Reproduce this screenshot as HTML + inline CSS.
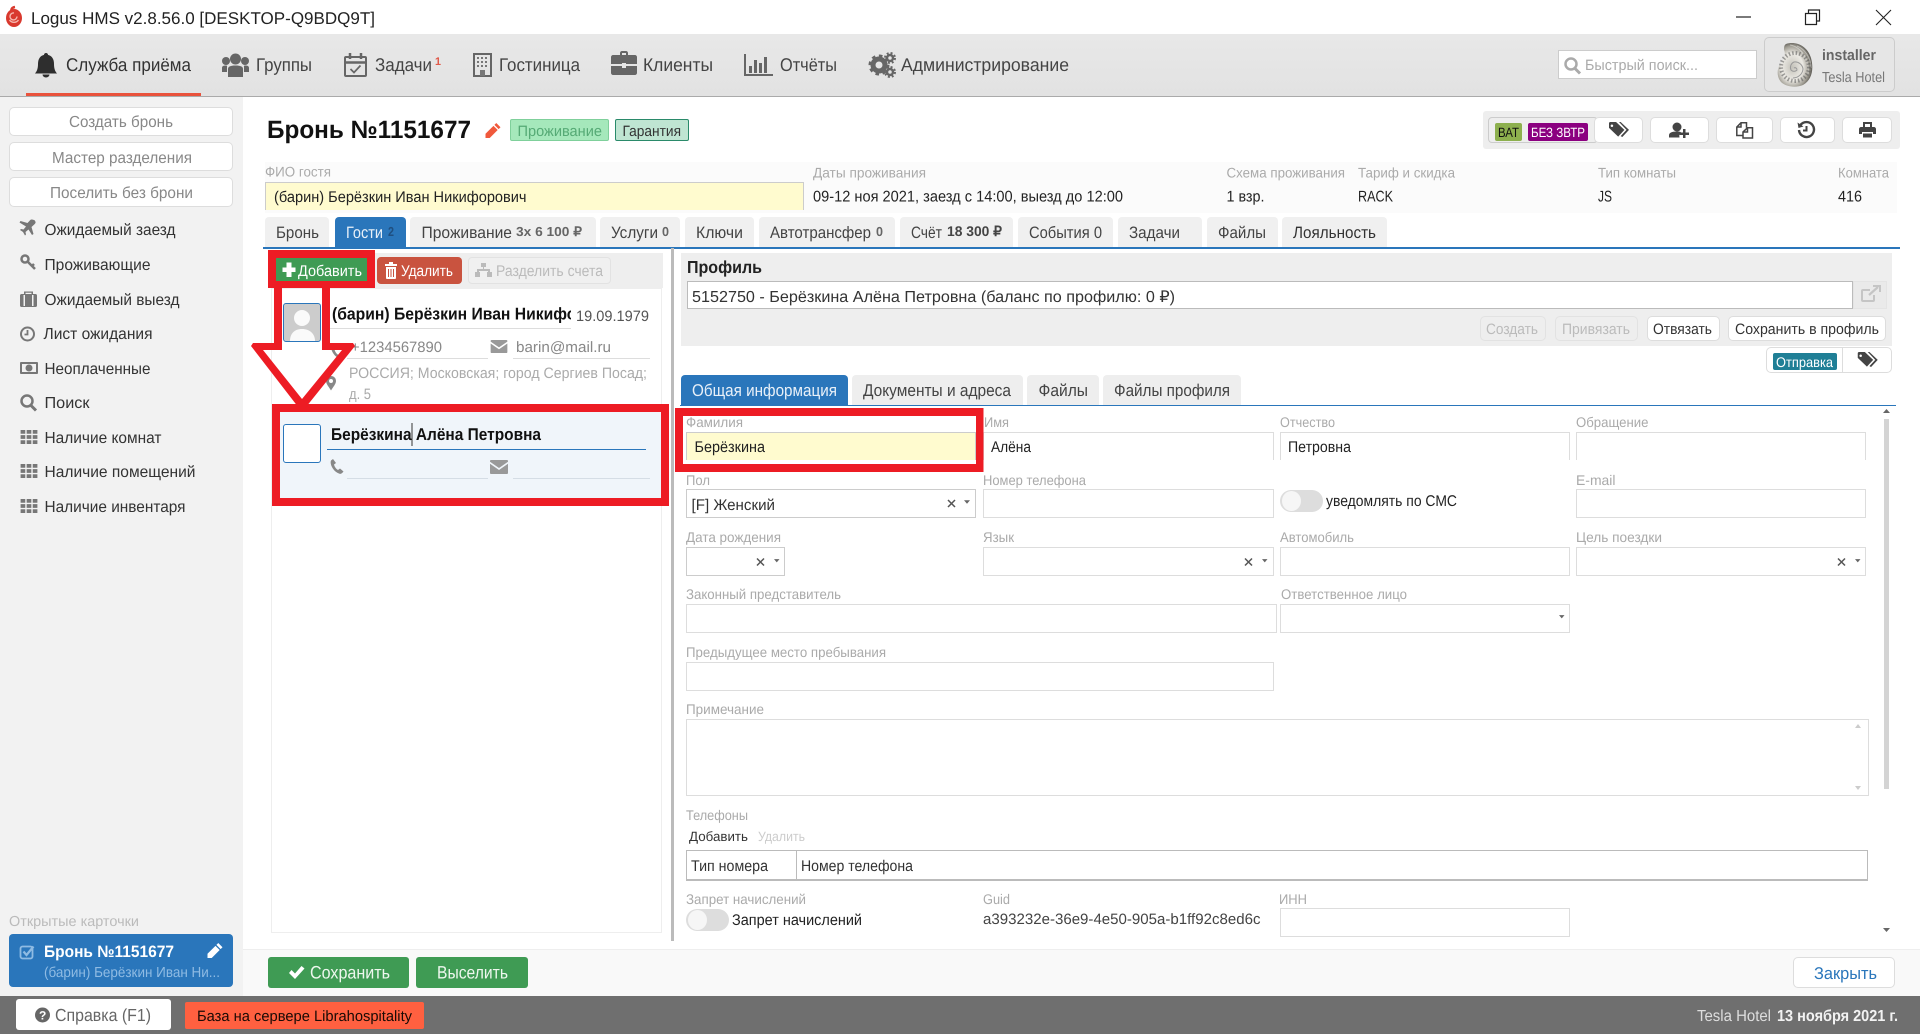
<!DOCTYPE html>
<html lang="ru"><head><meta charset="utf-8"><title>Logus HMS</title>
<style>
html,body{margin:0;padding:0;width:1920px;height:1034px;overflow:hidden;background:#fff;font-family:"Liberation Sans",sans-serif}
.b{position:absolute;box-sizing:border-box}
.tab{position:absolute;box-sizing:border-box;top:217px;height:30px;background:#f0f0f0;border-radius:4px 4px 0 0}
.tab2{position:absolute;box-sizing:border-box;top:375px;height:30px;background:#eee;border-radius:4px 4px 0 0}
.i{position:absolute;box-sizing:border-box;background:#fff;border:1px solid #ddd;height:29px}
.c{border-bottom:none;height:28px;top:432px}
.btn{position:absolute;box-sizing:border-box;background:#fff;border:1px solid #ddd;border-radius:5px}
svg.top{position:absolute;left:0;top:0}
svg.soft{filter:blur(.3px)}
text{font-family:"Liberation Sans",sans-serif;text-rendering:geometricPrecision}
.n{font-size:18.4px;fill:#444}
.s{font-size:16px;fill:#333}
.sb{font-size:16px;fill:#888}
.l{font-size:14px;fill:#aaa}
.v{font-size:15.5px;fill:#222}
.t{font-size:16.5px;fill:#444}
.m{font-size:13px;font-weight:bold;fill:#666}
.w{font-size:15.5px;fill:#fff}
.d{font-size:15px;fill:#bbb}
.k{font-size:15px;fill:#333}
</style></head><body>

<!-- nav -->
<div class="b" style="left:0;top:34px;width:1920px;height:63px;background:linear-gradient(#e8e8e8,#e2e2e2);border-bottom:1px solid #aaa"></div>
<div class="b" style="left:26px;top:93px;width:175px;height:3px;background:#e9523c"></div>
<div class="b" style="left:1558px;top:50px;width:199px;height:29px;background:#fff;border:1px solid #ccc"></div>
<div class="b" style="left:1764px;top:37px;width:131px;height:55px;background:#e6e6e6;border:1px solid #ccc;border-radius:5px"></div>

<!-- sidebar -->
<div class="b" style="left:0;top:97px;width:243px;height:899px;background:#f2f2f2"></div>
<div class="btn" style="left:9px;top:107px;width:224px;height:29px"></div>
<div class="btn" style="left:9px;top:142px;width:224px;height:29px"></div>
<div class="btn" style="left:9px;top:177px;width:224px;height:30px"></div>
<div class="b" style="left:9px;top:934px;width:224px;height:53px;background:#2a76bb;border-radius:4px"></div>

<!-- header tools -->
<div class="b" style="left:1483px;top:111px;width:417px;height:38px;background:#eee;border-radius:3px"></div>
<div class="b" style="left:1488px;top:117px;width:110px;height:26px;background:#eee;border:1px solid #ccc;border-radius:4px"></div>
<div class="b" style="left:1495px;top:123px;width:27px;height:18px;background:#8db04e;border-radius:2px"></div>
<div class="b" style="left:1528px;top:123px;width:60px;height:18px;background:#8b0080;border-radius:2px"></div>
<div class="btn" style="left:1594px;top:117px;width:49px;height:26px"></div>
<div class="btn" style="left:1650px;top:117px;width:59px;height:26px"></div>
<div class="btn" style="left:1716px;top:117px;width:57px;height:26px"></div>
<div class="btn" style="left:1780px;top:117px;width:55px;height:26px"></div>
<div class="btn" style="left:1842px;top:117px;width:50px;height:26px"></div>
<div class="b" style="left:510px;top:119px;width:99px;height:22px;background:#a5e8bb;border:1px solid #7fd09b;border-radius:2px"></div>
<div class="b" style="left:615px;top:119px;width:74px;height:22px;background:#bfe5d2;border:1px solid #2a8a6a;border-radius:2px"></div>

<!-- info band -->
<div class="b" style="left:265px;top:162px;width:1632px;height:51px;background:#fbfbfb"></div>
<div class="b" style="left:265px;top:182px;width:539px;height:28px;background:#fffbcf;border:1px solid #ccc;border-bottom:none"></div>

<!-- main tabs -->
<div class="tab" style="left:265px;width:64px"></div>
<div class="tab" style="left:335px;width:71px;background:#2a76bb"></div>
<div class="tab" style="left:410px;width:186px"></div>
<div class="tab" style="left:600px;width:80px"></div>
<div class="tab" style="left:685px;width:69px"></div>
<div class="tab" style="left:759px;width:136px"></div>
<div class="tab" style="left:900px;width:113px"></div>
<div class="tab" style="left:1018px;width:95px"></div>
<div class="tab" style="left:1118px;width:84px"></div>
<div class="tab" style="left:1207px;width:71px"></div>
<div class="tab" style="left:1282px;width:105px"></div>
<div class="b" style="left:263px;top:247px;width:1637px;height:2px;background:#2a76bb"></div>

<!-- guests panel -->
<div class="b" style="left:268px;top:253px;width:395px;height:35px;background:#eee"></div>
<div class="b" style="left:271px;top:288px;width:391px;height:645px;background:#fff;border:1px solid #eee"></div>
<div class="b" style="left:276px;top:258px;width:91px;height:23px;background:#3f9b54"></div>
<div class="b" style="left:377px;top:257px;width:85px;height:27px;background:#c9533f;border-radius:4px"></div>
<div class="b" style="left:468px;top:257px;width:143px;height:27px;background:#f0f0f0;border:1px solid #e2e2e2;border-radius:4px"></div>
<div class="b" style="left:283px;top:303px;width:38px;height:39px;background:#ccc;border:1px solid #2a76bb;border-radius:3px;overflow:hidden"></div>
<div class="b" style="left:280px;top:412px;width:381px;height:86px;background:#f0f5fa"></div>
<div class="b" style="left:283px;top:424px;width:38px;height:39px;background:#fff;border:1px solid #2a76bb;border-radius:3px"></div>
<div class="b" style="left:330px;top:328px;width:241px;height:1px;background:#ddd"></div>
<div class="b" style="left:347px;top:358px;width:141px;height:1px;background:#ddd"></div>
<div class="b" style="left:513px;top:358px;width:137px;height:1px;background:#ddd"></div>
<div class="b" style="left:327px;top:449px;width:319px;height:1px;background:#2a76bb"></div>
<div class="b" style="left:347px;top:478px;width:141px;height:1px;background:#d5dde5"></div>
<div class="b" style="left:513px;top:478px;width:137px;height:1px;background:#d5dde5"></div>

<!-- divider -->
<div class="b" style="left:671px;top:248px;width:3px;height:693px;background:#bbb"></div>

<!-- profile -->
<div class="b" style="left:681px;top:253px;width:1211px;height:93px;background:#eee"></div>
<div class="b" style="left:687px;top:281px;width:1166px;height:28px;background:#fff;border:1px solid #bbb"></div>
<div class="b" style="left:1853px;top:281px;width:34px;height:28px;background:#eaeaea;border:1px solid #e4e4e4"></div>
<div class="btn" style="left:1480px;top:316px;width:66px;height:25px;background:#eee;border-color:#e2e2e2"></div>
<div class="btn" style="left:1555px;top:316px;width:83px;height:25px;background:#eee;border-color:#e2e2e2"></div>
<div class="btn" style="left:1647px;top:316px;width:73px;height:25px"></div>
<div class="btn" style="left:1728px;top:316px;width:158px;height:25px"></div>
<div class="btn" style="left:1766px;top:347px;width:126px;height:26px"></div>
<div class="b" style="left:1773px;top:353px;width:64px;height:17px;background:#1f7f96;border-radius:2px"></div>
<div class="b" style="left:1842px;top:347px;width:1px;height:26px;background:#ddd"></div>

<!-- profile tabs -->
<div class="tab2" style="left:681px;width:167px;background:#2a76bb"></div>
<div class="tab2" style="left:852px;width:171px"></div>
<div class="tab2" style="left:1027px;width:72px"></div>
<div class="tab2" style="left:1103px;width:138px"></div>
<div class="b" style="left:680px;top:405px;width:1216px;height:1px;background:#2a76bb"></div>

<!-- form -->
<div class="i c" style="left:686px;width:290px;background:#fffbcf;border-color:#ccc"></div>
<div class="i c" style="left:983px;width:291px"></div>
<div class="i c" style="left:1280px;width:290px"></div>
<div class="i c" style="left:1576px;width:290px"></div>
<div class="i" style="left:686px;top:489px;width:290px;border-color:#ccc"></div>
<div class="i" style="left:983px;top:489px;width:291px"></div>
<div class="b" style="left:1280px;top:490px;width:43px;height:22px;background:#ddd;border-radius:11px"></div>
<div class="b" style="left:1282px;top:491px;width:19px;height:20px;background:#f6f6f6;border-radius:50%"></div>
<div class="i" style="left:1576px;top:489px;width:290px"></div>
<div class="i" style="left:686px;top:547px;width:99px;border-color:#ccc"></div>
<div class="i" style="left:983px;top:547px;width:291px"></div>
<div class="i" style="left:1280px;top:547px;width:290px"></div>
<div class="i" style="left:1576px;top:547px;width:290px"></div>
<div class="i" style="left:686px;top:604px;width:591px"></div>
<div class="i" style="left:1280px;top:604px;width:290px"></div>
<div class="i" style="left:686px;top:662px;width:588px"></div>
<div class="i" style="left:686px;top:719px;width:1183px;height:77px"></div>
<div class="b" style="left:686px;top:850px;width:1182px;height:31px;background:#fff;border:1px solid #bbb;border-bottom-width:2px"></div>
<div class="b" style="left:796px;top:850px;width:1px;height:30px;background:#bbb"></div>
<div class="b" style="left:686px;top:909px;width:43px;height:22px;background:#ddd;border-radius:11px"></div>
<div class="b" style="left:688px;top:910px;width:19px;height:20px;background:#f6f6f6;border-radius:50%"></div>
<div class="i" style="left:1280px;top:908px;width:290px"></div>
<div class="b" style="left:1884px;top:419px;width:5px;height:370px;background:#d4d4d4"></div>

<!-- footer -->
<div class="b" style="left:243px;top:949px;width:1677px;height:47px;background:#f9f9f9;border-top:1px solid #eee"></div>
<div class="b" style="left:268px;top:957px;width:141px;height:31px;background:#3f9b54;border-radius:3px"></div>
<div class="b" style="left:416px;top:957px;width:112px;height:31px;background:#3f9b54;border-radius:3px"></div>
<div class="btn" style="left:1793px;top:957px;width:102px;height:31px"></div>
<div class="b" style="left:0;top:996px;width:1920px;height:38px;background:#6f6f6f"></div>
<div class="b" style="left:16px;top:999px;width:155px;height:31px;background:#fff;border-radius:3px"></div>
<div class="b" style="left:185px;top:1002px;width:239px;height:27px;background:#ff6040;border-radius:2px"></div>

<svg class="top soft" width="1920" height="1034" viewBox="0 0 1920 1034" xmlns="http://www.w3.org/2000/svg">
<defs>
<radialGradient id="sh" cx="42%" cy="55%" r="62%"><stop offset="0" stop-color="#c4c2ba"/><stop offset=".5" stop-color="#eceae4"/><stop offset=".78" stop-color="#a09d93"/><stop offset="1" stop-color="#3f3d38"/></radialGradient>
<symbol id="tag" viewBox="0 0 24 18"><path fill="#444" d="M0 1.5C0 .7.7 0 1.500 0h7l10 9.500L11 17.500 0 7zM3.500 3a1.500 1.500 0 1 0 0 3 1.500 1.500 0 0 0 0-3zM12 0h2l10 9.500L16 18l-2-1 7-7.500z"/></symbol>
<symbol id="grid" viewBox="0 0 18 15"><path fill="#777" d="M0 0h5v4H0zM6.500 0h5v4h-5zM13 0h5v4h-5zM0 5.500h5v4H0zM6.500 5.500h5v4h-5zM13 5.500h5v4h-5zM0 11h5v4H0zM6.500 11h5v4h-5zM13 11h5v4h-5z"/></symbol>
<symbol id="phone" viewBox="0 0 14 15"><path fill="#888" d="M3 0L1 1.500C-.5 5 3 12.500 9.500 14.800c1.500.4 3-.8 4-2.300L10 9.500 8 11C6 10 4.500 7.500 4 5.500L6 4z"/></symbol>
<symbol id="env" viewBox="0 0 18 14"><path fill="#999" d="M1 0h16c.6 0 1 .4 1 1v.8L9 8 0 1.800V1c0-.6.4-1 1-1zM0 3.800L9 10l9-6.200V13c0 .6-.4 1-1 1H1c-.6 0-1-.4-1-1z"/></symbol>
<symbol id="pen" viewBox="0 0 16 16"><path d="M11.500 0L16 4.500 14 6.500 9.500 2zM8.500 3L13 7.500 4.500 16H0v-4.500z"/></symbol>
<symbol id="x" viewBox="0 0 9 9"><path d="M1 1l7 7M8 1L1 8" stroke="#555" stroke-width="1.500" fill="none"/></symbol>
<symbol id="car" viewBox="0 0 7 4"><path fill="#666" d="M0 0h7L3.500 4z"/></symbol>
</defs>

<!-- title bar -->
<g>
<ellipse cx="14" cy="18" rx="8" ry="9" fill="#d9392e"/><path d="M15 7c-3 .5-4 2-3.500 4.500" stroke="#d9392e" stroke-width="2.500" fill="none"/><path d="M17 16.500a3.500 3.500 0 1 1-3-3.500M9.500 20a5.500 5.500 0 0 0 9 0" stroke="#f6b7ad" stroke-width="1.400" fill="none"/>
</g>
<text x="31" y="24" font-size="17" fill="#222" textLength="344" lengthAdjust="spacingAndGlyphs">Logus HMS v2.8.56.0 [DESKTOP-Q9BDQ9T]</text>
<path d="M1736 17h15" stroke="#222" stroke-width="1.200"/>
<path d="M1805.500 13.500h11v11h-11zM1808.500 13.500v-3.500h11v11h-3" fill="none" stroke="#222" stroke-width="1.200"/>
<path d="M1876 10l15 15M1891 10l-15 15" stroke="#222" stroke-width="1.100"/>

<!-- nav icons -->
<path fill="#2e2e2e" d="M46 53c1.300 0 2 .9 2 1.900 4 1 6 4.300 6 9.100 0 5.500 1.500 7.500 3 9.500H35c1.500-2 3-4 3-9.500 0-4.800 2-8.100 6-9.100 0-1 .7-1.900 2-1.900zM42.500 74.500h7a3.500 3 0 0 1-7 0z"/>
<g fill="#666"><circle cx="235.500" cy="59" r="5.500"/><circle cx="226" cy="61" r="4"/><circle cx="245" cy="61" r="4"/><path d="M228 77V69c0-2.500 2.500-3.500 7.500-3.500S243 66.500 243 69v8zM222 72v-4c0-2 1.500-2.500 4-2.500 1 0 1.300.3 1 1.500v5zM249 72v-4c0-2-1.500-2.500-4-2.500-1 0-1.300.3-1 1.500v5z"/></g>
<g fill="none" stroke="#666" stroke-width="2"><rect x="345" y="57" width="21" height="19" rx="1"/><path d="M345 62.500h21" stroke-width="2.500"/><path d="M350 53v6M361 53v6" stroke-width="2.500"/><path d="M350.500 69l3.500 3.500 6.500-7" stroke-width="1.700"/></g>
<g><rect x="474" y="54" width="17" height="22" fill="none" stroke="#666" stroke-width="2"/><path fill="#777" d="M477 57h2v2h-2zM481 57h2v2h-2zM485 57h2v2h-2zM477 61h2v2h-2zM481 61h2v2h-2zM485 61h2v2h-2zM477 65h2v2h-2zM481 65h2v2h-2zM485 65h2v2h-2zM480 70h5v6h-5z"/></g>
<path fill="#666" d="M620 57v-2c0-1 .8-2 2-2h4c1.200 0 2 1 2 2v2h7c1 0 2 1 2 2v7h-11v-1h-4v1h-11v-7c0-1 1-2 2-2zM622 57h4v-2h-4zM611 68h11v2h4v-2h11v7c0 1-1 2-2 2h-22c-1 0-2-1-2-2z" transform="translate(0 -2)"/>
<g fill="#666"><path d="M744 54h2v20h27v2h-29z"/><path d="M749 66h3v7h-3zM754 60h3v13h-3zM759 63h3v10h-3zM764 57h3v16h-3z"/></g>
<g fill="none" stroke="#666"><circle cx="879" cy="65" r="6" stroke-width="5"/><circle cx="879" cy="65" r="9" stroke-width="3" stroke-dasharray="3.500 3.500"/><circle cx="890" cy="58" r="3" stroke-width="2.500"/><circle cx="890" cy="58" r="5" stroke-width="2" stroke-dasharray="2 2"/><circle cx="890" cy="72" r="3" stroke-width="2.500"/><circle cx="890" cy="72" r="5" stroke-width="2" stroke-dasharray="2 2"/></g>

<text class="n" x="66" y="71" textLength="125" lengthAdjust="spacingAndGlyphs" style="fill:#333">Служба приёма</text>
<text class="n" x="256" y="71" textLength="56" lengthAdjust="spacingAndGlyphs">Группы</text>
<text class="n" x="375" y="71" textLength="57" lengthAdjust="spacingAndGlyphs">Задачи</text>
<text x="435" y="65" font-size="11" font-weight="bold" fill="#e05a4a" textLength="6" lengthAdjust="spacingAndGlyphs">1</text>
<text class="n" x="499" y="71" textLength="81" lengthAdjust="spacingAndGlyphs">Гостиница</text>
<text class="n" x="643" y="71" textLength="70" lengthAdjust="spacingAndGlyphs">Клиенты</text>
<text class="n" x="780" y="71" textLength="57" lengthAdjust="spacingAndGlyphs">Отчёты</text>
<text class="n" x="901" y="71" textLength="168" lengthAdjust="spacingAndGlyphs">Администрирование</text>

<circle cx="1571" cy="64" r="5.500" fill="none" stroke="#aaa" stroke-width="2.500"/><path d="M1575 68.500l5 5" stroke="#aaa" stroke-width="3"/>
<text x="1585" y="70" font-size="15" fill="#aaa" textLength="113" lengthAdjust="spacingAndGlyphs">Быстрый поиск...</text>

<!-- shell -->
<path d="M1786 44c9-3 21 1 25 14 3 11 1 22-8 27-7 3-17 2-22-3-5-6-4-14 0-19 3-4 5-9 3-13 0-2 0-5 2-6z" fill="url(#sh)"/>
<path d="M1797 46c8 3 14 12 14 22M1790 45c12 2 20 16 18 30" fill="none" stroke="#fff" stroke-opacity=".4" stroke-width="1"/>
<circle cx="1795" cy="67" r="14" fill="none" stroke="#555" stroke-opacity=".55" stroke-width="4" stroke-dasharray="1.500 2"/>
<path d="M1794 68a2 2 0 0 1 3 2 4 4 0 0 1-6 0 6 6 0 0 1 3-8 8 8 0 0 1 9 7 10 10 0 0 1-10 9" fill="none" stroke="#999" stroke-width="1"/>
<text x="1822" y="60" font-size="15" font-weight="bold" fill="#666" textLength="54" lengthAdjust="spacingAndGlyphs">installer</text>
<text x="1822" y="82" font-size="14.500" fill="#777" textLength="63" lengthAdjust="spacingAndGlyphs">Tesla Hotel</text>

<!-- sidebar texts -->
<text class="sb" x="69" y="127" textLength="104" lengthAdjust="spacingAndGlyphs">Создать бронь</text>
<text class="sb" x="52" y="163" textLength="140" lengthAdjust="spacingAndGlyphs">Мастер разделения</text>
<text class="sb" x="50" y="198" textLength="143" lengthAdjust="spacingAndGlyphs">Поселить без брони</text>
<text class="s" x="44.500" y="235" textLength="131" lengthAdjust="spacingAndGlyphs">Ожидаемый заезд</text>
<text class="s" x="44.500" y="270" textLength="106" lengthAdjust="spacingAndGlyphs">Проживающие</text>
<text class="s" x="44.500" y="305" textLength="135" lengthAdjust="spacingAndGlyphs">Ожидаемый выезд</text>
<text class="s" x="43.500" y="339" textLength="109" lengthAdjust="spacingAndGlyphs">Лист ожидания</text>
<text class="s" x="44.500" y="374" textLength="106" lengthAdjust="spacingAndGlyphs">Неоплаченные</text>
<text class="s" x="44.500" y="408" textLength="45" lengthAdjust="spacingAndGlyphs">Поиск</text>
<text class="s" x="44.500" y="443" textLength="117" lengthAdjust="spacingAndGlyphs">Наличие комнат</text>
<text class="s" x="44.500" y="477" textLength="151" lengthAdjust="spacingAndGlyphs">Наличие помещений</text>
<text class="s" x="44.500" y="512" textLength="141" lengthAdjust="spacingAndGlyphs">Наличие инвентаря</text>

<!-- sidebar icons -->
<path fill="#777" d="M34 221c1 1 .8 2-.5 3.300L30.500 227l2 7-1.500 1-3.500-5.500-3 2.500.5 2.500-1 1-2-3.500-3-2 1-1 2.500.5 2.500-3L18.500 222.500l1-1.500 7 2 2.800-3c1.300-1.300 3.700 0 4.700.5z" transform="translate(1 0)"/>
<g fill="none" stroke="#777"><circle cx="25" cy="259" r="3.500" stroke-width="2.500"/><path d="M28 262l7 7M32 266l2-2" stroke-width="2.500"/></g>
<path fill="#777" d="M24 294v-2.500h9V294h2.500c1 0 1.500 .8 1.500 1.500v10c0 .8-.5 1.500-1.500 1.500h-14c-1 0-1.500-.7-1.500-1.500v-10c0-.7.500-1.500 1.500-1.500zM25.500 294h6v-1.200h-6zM23.500 295v11h1.500v-11zM32 295v11h1.500v-11z"/>
<g fill="none" stroke="#777"><circle cx="27.500" cy="334" r="6.500" stroke-width="2"/><path d="M27.500 330v4.500h-3" stroke-width="1.800"/></g>
<g><rect x="20" y="362" width="18" height="12" fill="#777" rx="1"/><rect x="22" y="364" width="14" height="8" fill="#f2f2f2"/><circle cx="29" cy="368" r="3.500" fill="#777"/></g>
<g fill="none" stroke="#777"><circle cx="27" cy="401" r="5.500" stroke-width="2.500"/><path d="M31 405.500l5 5" stroke-width="3"/></g>
<use href="#grid" x="20" y="430" width="18" height="14"/>
<use href="#grid" x="20" y="464" width="18" height="14"/>
<use href="#grid" x="20" y="499" width="18" height="14"/>

<text x="9" y="926" font-size="14.500" fill="#bbb" textLength="130" lengthAdjust="spacingAndGlyphs">Открытые карточки</text>
<g fill="none" stroke="#8fbbe3"><rect x="20.500" y="946.500" width="12" height="12" rx="2" stroke-width="1.800"/><path d="M23.500 951.500l3 3.500 7-8.500" stroke-width="2.200"/></g>
<text x="44" y="957" font-size="16.500" font-weight="bold" fill="#fff" textLength="130" lengthAdjust="spacingAndGlyphs">Бронь №1151677</text>
<use href="#pen" x="207" y="943" width="16" height="15" fill="#fff"/>
<text x="44" y="977" font-size="14.500" fill="#8fbbe3" textLength="176" lengthAdjust="spacingAndGlyphs">(барин) Берёзкин Иван Ни...</text>

<!-- header -->
<text x="267" y="138" font-size="25" font-weight="bold" fill="#111" textLength="204" lengthAdjust="spacingAndGlyphs">Бронь №1151677</text>
<use href="#pen" x="485" y="123" width="16" height="15" fill="#f0593c"/>
<text x="517.500" y="136" font-size="15" fill="#55aa75" textLength="84.500" lengthAdjust="spacingAndGlyphs">Проживание</text>
<text x="622.500" y="136" font-size="15" fill="#333" textLength="58.500" lengthAdjust="spacingAndGlyphs">Гарантия</text>
<text x="1498" y="137" font-size="13.500" fill="#111" textLength="21" lengthAdjust="spacingAndGlyphs">ВАТ</text>
<text x="1531" y="137" font-size="13.500" fill="#fff" textLength="54" lengthAdjust="spacingAndGlyphs">БЕЗ ЗВТР</text>
<use href="#tag" x="1609" y="122" width="20" height="15"/>
<g fill="#444"><circle cx="1677" cy="127" r="4.500"/><path d="M1669 137.500v-2c0-2.500 2-4 8-4 2 0 3 .2 4 .6-1.500 1-2 2.500-1.500 5.400z"/><path d="M1683 129h2.500v3.500h3.500v2.500h-3.500v3h-2.500v-3h-3.500v-2.500h3.500z"/></g>
<g fill="none" stroke="#444" stroke-width="1.500"><path d="M1743 135.500h-6.200V127l4.200-4.200h5.500v5"/><path d="M1741 123v4h-4"/><path d="M1747.500 127.800h5V138h-9.500v-6z" fill="#fff"/><path d="M1747.500 128v4h-4.500"/></g>
<g fill="none" stroke="#444"><path d="M1800.500 125a7.500 7.500 0 1 1-1.500 5" stroke-width="2.400"/><path d="M1806.500 126v4.500h-3.500" stroke-width="2"/><path d="M1797.500 122.500l1 5.500 5-1.500z" fill="#444" stroke="none"/></g>
<g fill="#444"><path d="M1863 122h9v5h-2v-3h-5v3h-2z"/><path d="M1861 127h13c1 0 2 1 2 2v5h-3v-2h-11v2h-3v-5c0-1 1-2 2-2z"/><path d="M1863 133.500h9v4h-9z"/></g>

<text class="l" x="265" y="176.500" textLength="66" lengthAdjust="spacingAndGlyphs">ФИО гостя</text>
<text class="v" x="274" y="202" textLength="252.500" lengthAdjust="spacingAndGlyphs">(барин) Берёзкин Иван Никифорович</text>
<text class="l" x="813" y="177.500" textLength="113" lengthAdjust="spacingAndGlyphs">Даты проживания</text>
<text class="v" x="813" y="201.500" textLength="310" lengthAdjust="spacingAndGlyphs">09-12 ноя 2021, заезд с 14:00, выезд до 12:00</text>
<text class="l" x="1226.500" y="177.500" textLength="118.500" lengthAdjust="spacingAndGlyphs">Схема проживания</text>
<text class="v" x="1226.500" y="201.500" textLength="38" lengthAdjust="spacingAndGlyphs">1 взр.</text>
<text class="l" x="1358" y="177.500" textLength="97" lengthAdjust="spacingAndGlyphs">Тариф и скидка</text>
<text class="v" x="1358" y="201.500" textLength="35" lengthAdjust="spacingAndGlyphs">RACK</text>
<text class="l" x="1598" y="177.500" textLength="78" lengthAdjust="spacingAndGlyphs">Тип комнаты</text>
<text class="v" x="1598" y="201.500" textLength="14" lengthAdjust="spacingAndGlyphs">JS</text>
<text class="l" x="1838" y="177.500" textLength="51" lengthAdjust="spacingAndGlyphs">Комната</text>
<text class="v" x="1838" y="201.500" textLength="24" lengthAdjust="spacingAndGlyphs">416</text>

<!-- tabs text -->
<text class="t" x="276" y="238" textLength="43" lengthAdjust="spacingAndGlyphs">Бронь</text>
<text class="t" x="346" y="238" textLength="37" lengthAdjust="spacingAndGlyphs" style="fill:#e8f0f8">Гости</text>
<text x="388" y="236" font-size="13" font-weight="bold" fill="#1f4f80" textLength="6" lengthAdjust="spacingAndGlyphs">2</text>
<text class="t" x="421.500" y="238" textLength="90.500" lengthAdjust="spacingAndGlyphs">Проживание</text>
<text class="m" x="516" y="236" textLength="66" lengthAdjust="spacingAndGlyphs">3x 6 100 ₽</text>
<text class="t" x="611" y="238" textLength="47" lengthAdjust="spacingAndGlyphs">Услуги</text>
<text class="m" x="662" y="236" textLength="7" lengthAdjust="spacingAndGlyphs">0</text>
<text class="t" x="696" y="238" textLength="47" lengthAdjust="spacingAndGlyphs">Ключи</text>
<text class="t" x="770" y="238" textLength="101" lengthAdjust="spacingAndGlyphs">Автотрансфер</text>
<text class="m" x="876" y="236" textLength="7" lengthAdjust="spacingAndGlyphs">0</text>
<text class="t" x="911" y="238" textLength="31" lengthAdjust="spacingAndGlyphs">Счёт</text>
<text x="947" y="236" font-size="14" font-weight="bold" fill="#444" textLength="55" lengthAdjust="spacingAndGlyphs">18 300 ₽</text>
<text class="t" x="1029" y="238" textLength="73" lengthAdjust="spacingAndGlyphs">События 0</text>
<text class="t" x="1129" y="238" textLength="51" lengthAdjust="spacingAndGlyphs">Задачи</text>
<text class="t" x="1218" y="238" textLength="48" lengthAdjust="spacingAndGlyphs">Файлы</text>
<text class="t" x="1293" y="238" textLength="83" lengthAdjust="spacingAndGlyphs" style="fill:#333">Лояльность</text>

<!-- guests toolbar -->
<path d="M286.500 263h5v5h4v4.500h-4v5h-5v-5h-4V268h4z" fill="#fff" transform="translate(0 -.500)"/>
<text class="w" x="298" y="276" textLength="64" lengthAdjust="spacingAndGlyphs">Добавить</text>
<g fill="#fff"><path d="M385 264h12v2h-12zM389 262h4v2h-4zM386 267h10v11c0 .6-.4 1-1 1h-8c-.6 0-1-.4-1-1z"/></g>
<path d="M388.500 269v8M391 269v8M393.500 269v8" stroke="#c9533f" stroke-width="1"/>
<text class="w" x="401" y="276" textLength="52" lengthAdjust="spacingAndGlyphs">Удалить</text>
<g fill="#bbb"><path d="M481 263h5v4h-2v2h6v3h2v5h-5v-5h1v-1h-9v1h1v5h-5v-5h2v-3h6v-2h-2z"/></g>
<text x="496" y="276" font-size="15.500" fill="#bbb" textLength="107" lengthAdjust="spacingAndGlyphs">Разделить счета</text>

<!-- guest 1 -->
<g fill="#fafafa"><circle cx="302" cy="318" r="8"/><path d="M290 341c0-7 4-12 12-12s13 5 13 12z"/></g>
<svg x="330" y="300" width="241" height="30" viewBox="330 300 241 30"><text x="332" y="319.500" font-size="17" font-weight="bold" fill="#111" textLength="292" lengthAdjust="spacingAndGlyphs">(барин) Берёзкин Иван Никифорович</text></svg>
<text x="576" y="321" font-size="15" fill="#555" textLength="73" lengthAdjust="spacingAndGlyphs">19.09.1979</text>
<use href="#phone" x="330" y="344" width="15" height="15"/>
<text x="351" y="352" font-size="15" fill="#888" textLength="91" lengthAdjust="spacingAndGlyphs">+1234567890</text>
<use href="#env" x="490" y="340" width="18" height="13"/>
<text x="516" y="352" font-size="15" fill="#888" textLength="95" lengthAdjust="spacingAndGlyphs">barin@mail.ru</text>
<path fill="#888" d="M331 376c3 0 5 2.200 5 5 0 3-3 6-5 9.500-2-3.500-5-6.500-5-9.500 0-2.800 2-5 5-5zm0 3a2 2 0 1 0 0 4 2 2 0 0 0 0-4z"/>
<text x="349" y="378" font-size="15" fill="#aaa" textLength="298" lengthAdjust="spacingAndGlyphs">РОССИЯ; Московская; город Сергиев Посад;</text>
<text x="349" y="399" font-size="15" fill="#aaa" textLength="22" lengthAdjust="spacingAndGlyphs">д. 5</text>

<!-- guest 2 -->
<text x="331" y="440" font-size="17" font-weight="bold" fill="#111" textLength="210" lengthAdjust="spacingAndGlyphs">Берёзкина Алёна Петровна</text>
<path d="M412 423v23" stroke="#333" stroke-width="1"/>
<use href="#phone" x="329.500" y="459" width="15" height="15"/>
<use href="#env" x="490" y="460" width="18" height="14"/>

<!-- profile text -->
<text x="687" y="273" font-size="17.500" font-weight="bold" fill="#222" textLength="75" lengthAdjust="spacingAndGlyphs">Профиль</text>
<text x="692" y="302" font-size="16" fill="#333" textLength="483" lengthAdjust="spacingAndGlyphs">5152750 - Берёзкина Алёна Петровна (баланс по профилю: 0 ₽)</text>
<g fill="none" stroke="#c5c5c5"><path d="M1870 290h-7c-.6 0-1 .4-1 1v9c0 .6.4 1 1 1h10c.6 0 1-.4 1-1v-5" stroke-width="2"/><path d="M1869 295l9-8" stroke-width="2.200"/><path d="M1873 286h7v6" stroke-width="2"/></g>
<text class="d" x="1486" y="334" textLength="52" lengthAdjust="spacingAndGlyphs">Создать</text>
<text class="d" x="1562" y="334" textLength="68" lengthAdjust="spacingAndGlyphs">Привязать</text>
<text class="k" x="1653" y="334" textLength="59" lengthAdjust="spacingAndGlyphs">Отвязать</text>
<text class="k" x="1735" y="334" textLength="144" lengthAdjust="spacingAndGlyphs">Сохранить в профиль</text>
<text x="1776" y="367" font-size="14" fill="#fff" textLength="57" lengthAdjust="spacingAndGlyphs">Отправка</text>
<use href="#tag" x="1857.500" y="352" width="20.500" height="15"/>

<text x="692" y="396" font-size="17" fill="#e8f0f8" textLength="145" lengthAdjust="spacingAndGlyphs">Общая информация</text>
<text x="863" y="396" font-size="17" fill="#444" textLength="148" lengthAdjust="spacingAndGlyphs">Документы и адреса</text>
<text x="1038.500" y="396" font-size="17" fill="#444" textLength="49.500" lengthAdjust="spacingAndGlyphs">Файлы</text>
<text x="1114" y="396" font-size="17" fill="#444" textLength="116" lengthAdjust="spacingAndGlyphs">Файлы профиля</text>

<!-- form labels -->
<text class="l" x="686" y="427" textLength="57" lengthAdjust="spacingAndGlyphs">Фамилия</text>
<text class="l" x="984" y="427" textLength="25" lengthAdjust="spacingAndGlyphs">Имя</text>
<text class="l" x="1280" y="427" textLength="55" lengthAdjust="spacingAndGlyphs">Отчество</text>
<text class="l" x="1576" y="427" textLength="72.500" lengthAdjust="spacingAndGlyphs">Обращение</text>
<text class="v" x="694.500" y="452" textLength="70.500" lengthAdjust="spacingAndGlyphs">Берёзкина</text>
<text class="v" x="991" y="452" textLength="40" lengthAdjust="spacingAndGlyphs">Алёна</text>
<text class="v" x="1288" y="452" textLength="63" lengthAdjust="spacingAndGlyphs">Петровна</text>

<text class="l" x="686" y="485" textLength="24" lengthAdjust="spacingAndGlyphs">Пол</text>
<text class="l" x="983" y="485" textLength="103" lengthAdjust="spacingAndGlyphs">Номер телефона</text>
<text class="l" x="1576" y="485" textLength="39.500" lengthAdjust="spacingAndGlyphs">E-mail</text>
<text class="v" x="691.500" y="510" textLength="83.500" lengthAdjust="spacingAndGlyphs" style="fill:#333">[F] Женский</text>
<use href="#x" x="947" y="499" width="9" height="9"/><use href="#car" x="964" y="500" width="6" height="4"/>
<text class="v" x="1326" y="506" textLength="131" lengthAdjust="spacingAndGlyphs">уведомлять по СМС</text>

<text class="l" x="686" y="542" textLength="95" lengthAdjust="spacingAndGlyphs">Дата рождения</text>
<text class="l" x="983" y="542" textLength="31" lengthAdjust="spacingAndGlyphs">Язык</text>
<text class="l" x="1280" y="542" textLength="74" lengthAdjust="spacingAndGlyphs">Автомобиль</text>
<text class="l" x="1576" y="542" textLength="86" lengthAdjust="spacingAndGlyphs">Цель поездки</text>
<use href="#x" x="756" y="557.500" width="9" height="9"/><use href="#car" x="774" y="559" width="5.500" height="3.500"/>
<use href="#x" x="1244" y="557.500" width="9" height="9"/><use href="#car" x="1262" y="559" width="5.500" height="3.500"/>
<use href="#x" x="1837" y="557.500" width="9" height="9"/><use href="#car" x="1855" y="559" width="5.500" height="3.500"/>

<text class="l" x="686" y="599" textLength="155" lengthAdjust="spacingAndGlyphs">Законный представитель</text>
<text class="l" x="1281" y="599" textLength="126" lengthAdjust="spacingAndGlyphs">Ответственное лицо</text>
<use href="#car" x="1559" y="615" width="5.500" height="3.500"/>
<text class="l" x="686" y="657" textLength="200" lengthAdjust="spacingAndGlyphs">Предыдущее место пребывания</text>
<text class="l" x="686" y="714" textLength="78" lengthAdjust="spacingAndGlyphs">Примечание</text>
<path d="M1855 728h6l-3-4zM1855 786h6l-3 4z" fill="#ccc"/>

<text class="l" x="686" y="820" textLength="62" lengthAdjust="spacingAndGlyphs">Телефоны</text>
<text x="689" y="841" font-size="13.500" fill="#333" textLength="59" lengthAdjust="spacingAndGlyphs">Добавить</text>
<text x="758" y="841" font-size="13.500" fill="#ccc" textLength="47" lengthAdjust="spacingAndGlyphs">Удалить</text>
<text class="v" x="691" y="871" textLength="77" lengthAdjust="spacingAndGlyphs" style="fill:#333">Тип номера</text>
<text class="v" x="801" y="871" textLength="112" lengthAdjust="spacingAndGlyphs" style="fill:#333">Номер телефона</text>
<text class="l" x="686" y="904" textLength="120" lengthAdjust="spacingAndGlyphs">Запрет начислений</text>
<text class="l" x="983" y="904" textLength="27" lengthAdjust="spacingAndGlyphs">Guid</text>
<text class="l" x="1279" y="904" textLength="28" lengthAdjust="spacingAndGlyphs">ИНН</text>
<text class="v" x="732" y="925" textLength="130" lengthAdjust="spacingAndGlyphs">Запрет начислений</text>
<text x="983" y="924" font-size="15" fill="#444" textLength="277.500" lengthAdjust="spacingAndGlyphs">a393232e-36e9-4e50-905a-b1ff92c8ed6c</text>
<path d="M1883 413h7l-3.500-4zM1883 928h7l-3.500 4z" fill="#666"/>

<!-- footer -->
<path d="M289 973l2.500-3 3.500 3.500 6.500-7.500 3 2.500-9.500 10.500z" fill="#fff"/>
<text x="310" y="978.500" font-size="18" fill="#eef7ee" textLength="80" lengthAdjust="spacingAndGlyphs">Сохранить</text>
<text x="437" y="978.500" font-size="18" fill="#eef7ee" textLength="71" lengthAdjust="spacingAndGlyphs">Выселить</text>
<text x="1814" y="979" font-size="17" fill="#2a76bb" textLength="63" lengthAdjust="spacingAndGlyphs">Закрыть</text>
<circle cx="42.500" cy="1015" r="7.500" fill="#666"/><text x="39" y="1019.500" font-size="12" font-weight="bold" fill="#fff">?</text>
<text x="55" y="1021" font-size="17.500" fill="#666" textLength="96" lengthAdjust="spacingAndGlyphs">Справка (F1)</text>
<text x="197" y="1021" font-size="15" fill="#1a0a05" textLength="215" lengthAdjust="spacingAndGlyphs">База на сервере Librahospitality</text>
<text x="1697" y="1021" font-size="16" fill="#ddd" textLength="74" lengthAdjust="spacingAndGlyphs">Tesla Hotel</text>
<text x="1777" y="1021" font-size="16" font-weight="bold" fill="#f2f2f2" textLength="121" lengthAdjust="spacingAndGlyphs">13 ноября 2021 г.</text>
</svg>

<!-- red annotations -->
<svg class="top" width="1920" height="1034" viewBox="0 0 1920 1034" xmlns="http://www.w3.org/2000/svg">
<g fill="#ed1c24">
<path fill-rule="evenodd" d="M268 250h107v38H268zM276 258v23h91v-23z"/>
<path fill-rule="evenodd" d="M272 404h397v102H272zM280 412v86h381v-86z"/>
<path fill-rule="evenodd" d="M675 408h308.500v64H675zM683 416v48h293v-48z"/>
<path d="M274 288V343H253L251 346 302 412 355 346 353 343H330V288H322V350H342L302 399 263 350H282V288z"/>
</g>
</svg>
</body></html>
